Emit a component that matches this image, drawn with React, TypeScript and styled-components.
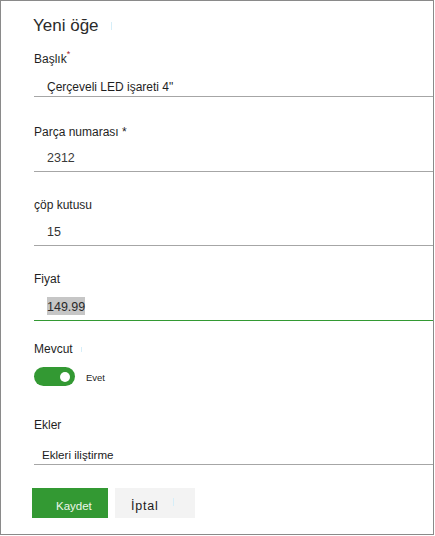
import React from "react";
import styled, { createGlobalStyle } from "styled-components";

const Global = createGlobalStyle`
  html, body { margin: 0; padding: 0; background: #ffffff; }
  body { font-family: "Liberation Sans", Arial, sans-serif; }
  * { box-sizing: border-box; }
`;

const Panel = styled.div`
  width: 434px;
  height: 535px;
  border: 1px solid #8a8a8a;
  padding: 13px 0 0 33px;
  display: flex;
  flex-direction: column;
  background: #fff;
`;

const Title = styled.h1`
  margin: 0 0 0 -1px;
  font-size: 17px;
  line-height: 24px;
  font-weight: 400;
  color: #2b2b2b;
  display: flex;
  align-items: center;
`;

const Tick = styled.span<{ $gap: number; $h: number }>`
  display: inline-block;
  width: 1px;
  height: ${(p) => p.$h}px;
  margin-left: ${(p) => p.$gap}px;
  background: #d6eef8;
`;

const Field = styled.div<{ $top: number }>`
  margin-top: ${(p) => p.$top}px;
  display: flex;
  flex-direction: column;
`;

const Label = styled.div`
  font-size: 12px;
  line-height: 16px;
  color: #1f1f1f;
  display: flex;
  align-items: center;
`;

const Req = styled.span`
  color: #a4262c;
  font-size: 9px;
  line-height: 9px;
  align-self: flex-start;
  margin-top: -1px;
`;

const Value = styled.div<{
  $pt: number;
  $pb: number;
  $pl: number;
  $size: number;
  $line?: string;
  $color?: string;
}>`
  padding: ${(p) => p.$pt}px 0 ${(p) => p.$pb}px ${(p) => p.$pl}px;
  font-size: ${(p) => p.$size}px;
  line-height: 16px;
  color: ${(p) => p.$color || "#262626"};
  border-bottom: 1px solid ${(p) => p.$line || "#a6a6a6"};
`;

const Selected = styled.span`
  background: #c6c6c6;
  padding: 2.5px 0 1.5px;
`;

const ToggleRow = styled.div`
  margin-top: 10px;
  display: flex;
  align-items: center;
`;

const Toggle = styled.div`
  width: 41px;
  height: 19px;
  border-radius: 10px;
  background: #339933;
  display: flex;
  align-items: center;
  justify-content: flex-end;
  padding-right: 5px;
`;

const Knob = styled.div`
  width: 10px;
  height: 10px;
  border-radius: 50%;
  background: #ffffff;
`;

const ToggleText = styled.span`
  margin-left: 11px;
  font-size: 9.5px;
  color: #1f1f1f;
  padding-top: 1px;
`;

const Actions = styled.div`
  margin: 23px 0 0 -2px;
  display: flex;
  gap: 7px;
`;

const Button = styled.button<{ $primary?: boolean; $w: number; $pl: number }>`
  width: ${(p) => p.$w}px;
  height: 30px;
  border: none;
  margin: 0;
  padding: 10px 0 0 ${(p) => p.$pl}px;
  display: flex;
  align-items: flex-start;
  font-family: "Liberation Sans", Arial, sans-serif;
  font-size: ${(p) => (p.$primary ? 11.5 : 12.5)}px;
  letter-spacing: ${(p) => (p.$primary ? 0 : 0.8)}px;
  line-height: 16px;
  background: ${(p) => (p.$primary ? "#339933" : "#f3f3f3")};
  color: ${(p) => (p.$primary ? "#eef7ea" : "#1a1a1a")};
  cursor: pointer;
`;

export default function App() {
  return (
    <>
      <Global />
      <Panel>
        <Title>
          Yeni öğe
          <Tick $gap={12} $h={8} />
        </Title>

        <Field $top={13}>
          <Label>
            Başlık<Req>*</Req>
          </Label>
          <Value $pt={12} $pb={1} $pl={13} $size={12} $color="#1f1f1f">
            Çerçeveli LED işareti 4"
          </Value>
        </Field>

        <Field $top={27}>
          <Label>Parça numarası *</Label>
          <Value $pt={10} $pb={5} $pl={13} $size={12.5} $color="#3a3a3a">
            2312
          </Value>
        </Field>

        <Field $top={25}>
          <Label>çöp kutusu</Label>
          <Value $pt={11} $pb={5} $pl={13} $size={12.5} $color="#333">
            15
          </Value>
        </Field>

        <Field $top={25}>
          <Label>Fiyat</Label>
          <Value $pt={11} $pb={6} $pl={13} $size={12.5} $color="#2a2a2a" $line="#339933">
            <Selected>149.99</Selected>
          </Value>
        </Field>

        <Field $top={20}>
          <Label>
            Mevcut
            <Tick $gap={8} $h={5} />
          </Label>
          <ToggleRow>
            <Toggle>
              <Knob />
            </Toggle>
            <ToggleText>Evet</ToggleText>
          </ToggleRow>
        </Field>

        <Field $top={31}>
          <Label>Ekler</Label>
          <Value $pt={14} $pb={1} $pl={8} $size={11.6} $color="#1a1a1a">
            Ekleri iliştirme
          </Value>
        </Field>

        <Actions>
          <Button $primary $w={76} $pl={24}>
            Kaydet
          </Button>
          <Button $w={80} $pl={16}>
            İptal
            <Tick $gap={14} $h={8} />
          </Button>
        </Actions>
      </Panel>
    </>
  );
}
